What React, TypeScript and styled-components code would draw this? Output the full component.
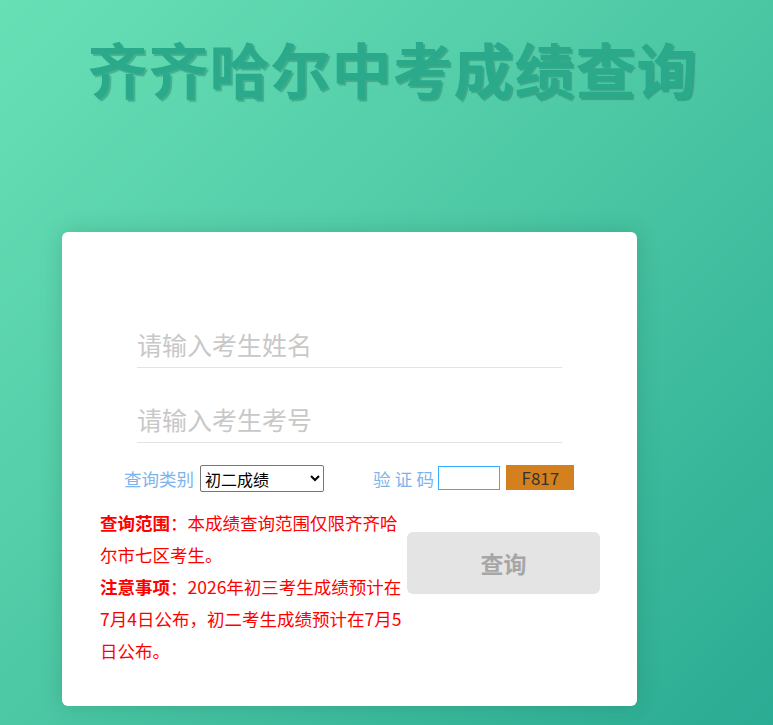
import React from 'react';
import styled, { createGlobalStyle } from 'styled-components';

const GlobalStyle = createGlobalStyle`
  html, body {
    margin: 0;
    padding: 0;
  }
  body {
    font-family: "Noto Sans CJK SC", "Noto Sans", sans-serif;
  }
`;

const Page = styled.div`
  min-height: 725px;
  box-sizing: border-box;
  padding-top: 28px;
  background: linear-gradient(135deg, #68e0b6 0%, #4fcaa6 45%, #2aab93 100%);
  overflow: hidden;
`;

const Title = styled.h1`
  margin: 0;
  padding-left: 12px;
  font-size: 60px;
  line-height: 80px;
  font-weight: 700;
  text-align: center;
  color: #2aa98b;
  text-shadow: 2px 2px 1px rgba(0, 70, 50, 0.28);
  letter-spacing: 1px;
`;

const Card = styled.div`
  width: 575px;
  height: 474px;
  margin: 124px 0 0 62px;
  box-sizing: border-box;
  padding-top: 95px;
  background: #fff;
  border-radius: 6px;
  box-shadow: 0 0 22px rgba(0, 60, 40, 0.18);
`;

const Field = styled.input`
  display: block;
  width: 425px;
  height: 41px;
  margin: 0 0 34px 75px;
  padding: 0 0 7px;
  box-sizing: border-box;
  border: none;
  border-bottom: 1px solid #e3e3e3;
  outline: none;
  font-family: inherit;
  font-size: 25px;
  color: #333;
  &::placeholder {
    color: #c8c8c8;
  }
  &:last-of-type {
    margin-bottom: 0;
  }
`;

const OptionRow = styled.div`
  display: flex;
  align-items: center;
  height: 34px;
  margin: 18px 0 0 62px;
`;

const Label = styled.span<{ $spaced?: boolean }>`
  font-size: 17.5px;
  color: #7cb4ee;
  letter-spacing: ${p => (p.$spaced ? '4.3px' : '0')};
  margin-right: ${p => (p.$spaced ? '0' : '6px')};
`;

const KindSelect = styled.select`
  width: 124px;
  height: 27px;
  margin-right: 49px;
  font-family: inherit;
  font-size: 16px;
  color: #000;
  background: #fff;
  border: 1px solid #767676;
  border-radius: 2px;
`;

const CodeInput = styled.input`
  width: 62px;
  height: 24px;
  box-sizing: border-box;
  margin-right: 6px;
  border: 1px solid #33adff;
  outline: none;
`;

const CodeBox = styled.span`
  display: flex;
  align-items: center;
  justify-content: center;
  width: 68px;
  height: 25px;
  margin-top: -2px;
  background: #d4801e;
  color: #333;
  font-size: 17px;
`;

const Bottom = styled.div`
  display: flex;
  align-items: flex-start;
  margin: 12px 0 0 38px;
`;

const Notes = styled.div`
  width: 307px;
  font-size: 17.5px;
  line-height: 32px;
  color: #ff0000;
  b {
    font-weight: 700;
  }
`;

const SubmitButton = styled.button`
  width: 193px;
  height: 62px;
  margin-top: 25px;
  border: none;
  border-radius: 6px;
  background: #e4e4e4;
  color: #a6a6a6;
  font-family: inherit;
  font-size: 23px;
  font-weight: 700;
`;

export default function App() {
  return (
    <>
      <GlobalStyle />
      <Page>
        <Title>齐齐哈尔中考成绩查询</Title>
        <Card>
          <Field placeholder="请输入考生姓名" />
          <Field placeholder="请输入考生考号" />
          <OptionRow>
            <Label>查询类别</Label>
            <KindSelect defaultValue="2">
              <option value="2">初二成绩</option>
              <option value="3">初三成绩</option>
            </KindSelect>
            <Label $spaced>验证码</Label>
            <CodeInput />
            <CodeBox>F817</CodeBox>
          </OptionRow>
          <Bottom>
            <Notes>
              <b>查询范围</b>：本成绩查询范围仅限齐齐哈尔市七区考生。
              <br />
              <b>注意事项</b>：2026年初三考生成绩预计在7月4日公布，初二考生成绩预计在7月5日公布。
            </Notes>
            <SubmitButton>查询</SubmitButton>
          </Bottom>
        </Card>
      </Page>
    </>
  );
}
